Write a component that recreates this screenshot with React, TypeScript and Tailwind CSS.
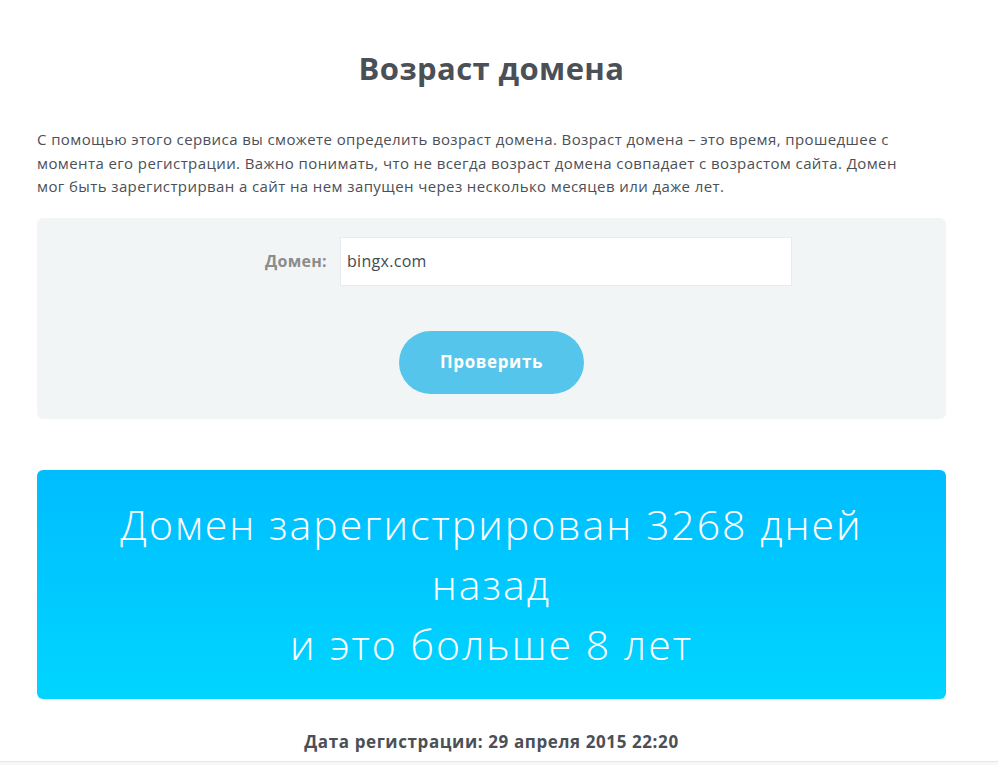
import React from 'react';

export default function App() {
  return (
    <div className="min-h-screen bg-white font-['Open_Sans','Noto_Sans',sans-serif] text-[#4b5057]">
      <div className="w-[983px] px-[37px]">
        {/* Title */}
        <h1 className="pt-[48px] text-center text-[31px] font-bold leading-[40px] tracking-[0.4px] text-[#4b5057]">
          Возраст домена
        </h1>

        {/* Description */}
        <p className="mt-[40px] text-[15px] leading-[23.5px] tracking-[0.4px]">
          С помощью этого сервиса вы сможете определить возраст домена. Возраст домена – это время, прошедшее с
          <br />
          момента его регистрации. Важно понимать, что не всегда возраст домена совпадает с возрастом сайта. Домен
          <br />
          мог быть зарегистрирван а сайт на нем запущен через несколько месяцев или даже лет.
        </p>

        {/* Form */}
        <div className="mt-[19px] flex h-[201px] flex-col rounded-md bg-[#f2f5f6] pt-[19px]">
          <div className="flex items-center">
            <label className="w-[290px] text-right text-[16px] font-bold tracking-[0.3px] text-[#8c8c8c]">
              Домен:
            </label>
            <div className="ml-[13px] flex h-[49px] w-[452px] items-center border border-[#e8ecee] bg-white px-[6px] text-[16px] tracking-[0.3px] text-[#454a50]">
              bingx.com
            </div>
          </div>
          <div className="flex justify-center">
            <button className="mt-[45px] h-[63px] w-[185px] rounded-full bg-[#56c5ec] text-[17px] font-bold tracking-[0.6px] text-white">
              Проверить
            </button>
          </div>
        </div>

        {/* Result */}
        <div className="mt-[51px] flex h-[229px] flex-col items-center justify-center rounded-md bg-gradient-to-b from-[#00bdff] to-[#00d5ff] text-center text-[41px] font-light leading-[60px] tracking-[2px] text-white">
          <span>Домен зарегистрирован 3268 дней</span>
          <span>назад</span>
          <span>и это больше 8 лет</span>
        </div>

        <div className="mt-[30px] text-center text-[17px] font-bold tracking-[0.6px] text-[#4b5057]">
          Дата регистрации: 29 апреля 2015 22:20
        </div>
      </div>
      <div className="mt-[7px] h-[20px] border-t border-[#e6e6e6] bg-[#f7f7f7]" />
    </div>
  );
}
